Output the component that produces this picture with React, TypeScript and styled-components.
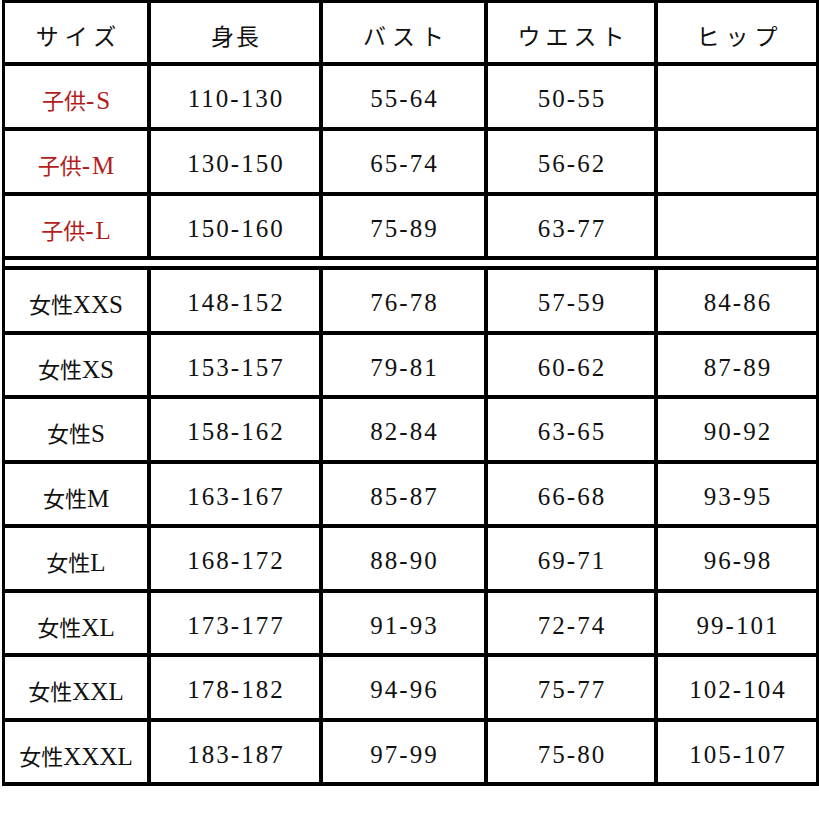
import React from "react";
import styled, { createGlobalStyle } from "styled-components";

const GlobalStyle = createGlobalStyle`
  html, body {
    margin: 0;
    padding: 0;
    background: #ffffff;
  }
  body {
    font-family: "Liberation Serif", "Noto Sans CJK JP", serif;
    color: #111111;
  }
`;

const COLS = "142px 168px 161px 166px 158px";

const Frame = styled.div`
  box-sizing: border-box;
  width: 817px;
  margin-left: 2px;
  border-left: 3px solid #000;
  border-right: 3px solid #000;
  display: flex;
  flex-direction: column;
  background: #fff;
`;

const Section = styled.div<{ $rows: string; $top: number }>`
  display: grid;
  grid-template-columns: ${COLS};
  grid-template-rows: ${(p) => p.$rows};
  gap: 4px;
  padding-top: ${(p) => p.$top}px;
  padding-bottom: 4px;
  background: #000;
`;

const Spacer = styled.div`
  height: 6px;
  background: #fff;
`;

const Cell = styled.div`
  background: #fff;
  display: flex;
  align-items: center;
  justify-content: center;
  padding-top: 5px;
  box-sizing: border-box;
  white-space: nowrap;
`;

const HeadText = styled.span<{ $spacing: number }>`
  font-family: "Noto Sans CJK JP", sans-serif;
  font-size: 23px;
  letter-spacing: ${(p) => p.$spacing}px;
  margin-right: -${(p) => p.$spacing}px;
  color: #111;
`;

const SizeLabel = styled.span<{ $red?: boolean }>`
  display: inline-flex;
  align-items: baseline;
  color: ${(p) => (p.$red ? "#b41c1c" : "#111")};
`;

const Kanji = styled.span`
  font-family: "Noto Sans CJK JP", sans-serif;
  font-size: 22px;
`;

const Latin = styled.span<{ $spacing: number }>`
  font-family: "Liberation Serif", serif;
  font-size: 25px;
  letter-spacing: ${(p) => p.$spacing}px;
  margin-right: -${(p) => p.$spacing}px;
`;

const Num = styled.span`
  font-family: "Liberation Serif", serif;
  font-size: 25px;
  letter-spacing: 2px;
  margin-right: -2px;
  color: #111;
`;

type Row = { kanji: string; latin: string; red?: boolean; vals: string[] };

const headers: { text: string; spacing: number }[] = [
  { text: "サイズ", spacing: 6 },
  { text: "身長", spacing: 2 },
  { text: "バスト", spacing: 6 },
  { text: "ウエスト", spacing: 5 },
  { text: "ヒップ", spacing: 6 },
];

const kids: Row[] = [
  { kanji: "子供", latin: "-S", red: true, vals: ["110-130", "55-64", "50-55", ""] },
  { kanji: "子供", latin: "-M", red: true, vals: ["130-150", "65-74", "56-62", ""] },
  { kanji: "子供", latin: "-L", red: true, vals: ["150-160", "75-89", "63-77", ""] },
];

const women: Row[] = [
  { kanji: "女性", latin: "XXS", vals: ["148-152", "76-78", "57-59", "84-86"] },
  { kanji: "女性", latin: "XS", vals: ["153-157", "79-81", "60-62", "87-89"] },
  { kanji: "女性", latin: "S", vals: ["158-162", "82-84", "63-65", "90-92"] },
  { kanji: "女性", latin: "M", vals: ["163-167", "85-87", "66-68", "93-95"] },
  { kanji: "女性", latin: "L", vals: ["168-172", "88-90", "69-71", "96-98"] },
  { kanji: "女性", latin: "XL", vals: ["173-177", "91-93", "72-74", "99-101"] },
  { kanji: "女性", latin: "XXL", vals: ["178-182", "94-96", "75-77", "102-104"] },
  { kanji: "女性", latin: "XXXL", vals: ["183-187", "97-99", "75-80", "105-107"] },
];

function DataRow({ row }: { row: Row }) {
  return (
    <>
      <Cell>
        <SizeLabel $red={row.red}>
          <Kanji>{row.kanji}</Kanji>
          <Latin $spacing={row.red ? 2 : 0}>{row.latin}</Latin>
        </SizeLabel>
      </Cell>
      {row.vals.map((v, i) => (
        <Cell key={i}>{v && <Num>{v}</Num>}</Cell>
      ))}
    </>
  );
}

export default function App() {
  return (
    <>
      <GlobalStyle />
      <Frame>
        <Section $rows="59px 61px 61px 60px" $top={3}>
          {headers.map((h) => (
            <Cell key={h.text}>
              <HeadText $spacing={h.spacing}>{h.text}</HeadText>
            </Cell>
          ))}
          {kids.map((r) => (
            <DataRow key={r.kanji + r.latin} row={r} />
          ))}
        </Section>
        <Spacer />
        <Section $rows="61px 60px 61px 60px 61px 60px 61px 60px" $top={4}>
          {women.map((r) => (
            <DataRow key={r.kanji + r.latin} row={r} />
          ))}
        </Section>
      </Frame>
    </>
  );
}
